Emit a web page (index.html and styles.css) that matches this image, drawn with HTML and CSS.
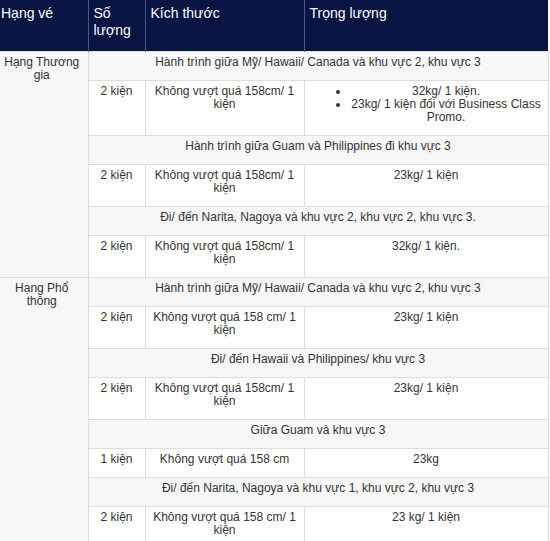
FILE: index.html
```html
<!DOCTYPE html>
<html lang="vi">
<head>
<meta charset="utf-8">
<title>Hành lý</title>
<link rel="stylesheet" href="styles.css">
</head>
<body>
<table class="bag-table">
  <colgroup>
    <col class="c-class">
    <col class="c-qty">
    <col class="c-size">
    <col class="c-weight">
  </colgroup>
  <thead>
    <tr>
      <th>Hạng vé</th>
      <th>Số lượng</th>
      <th>Kích thước</th>
      <th>Trọng lượng</th>
    </tr>
  </thead>
  <tbody>
    <tr>
      <td class="cls" rowspan="6">Hạng Thương gia</td>
      <td class="route" colspan="3">Hành trình giữa Mỹ/ Hawaii/ Canada và khu vực 2, khu vực 3</td>
    </tr>
    <tr>
      <td>2 kiện</td>
      <td>Không vượt quá 158cm/ 1 kiện</td>
      <td>
        <ul class="list">
          <li>32kg/ 1 kiện.</li>
          <li>23kg/ 1 kiện đối với Business Class Promo.</li>
        </ul>
      </td>
    </tr>
    <tr>
      <td class="route" colspan="3">Hành trình giữa Guam và Philippines đi khu vực 3</td>
    </tr>
    <tr>
      <td>2 kiện</td>
      <td>Không vượt quá 158cm/ 1 kiện</td>
      <td>23kg/ 1 kiện</td>
    </tr>
    <tr>
      <td class="route" colspan="3">Đi/ đến Narita, Nagoya và khu vực 2, khu vực 2, khu vực 3.</td>
    </tr>
    <tr>
      <td>2 kiện</td>
      <td>Không vượt quá 158cm/ 1 kiện</td>
      <td>32kg/ 1 kiện.</td>
    </tr>
    <tr>
      <td class="cls" rowspan="8">Hạng Phổ thông</td>
      <td class="route" colspan="3">Hành trình giữa Mỹ/ Hawaii/ Canada và khu vực 2, khu vực 3</td>
    </tr>
    <tr>
      <td>2 kiện</td>
      <td>Không vượt quá 158 cm/ 1 kiện</td>
      <td>23kg/ 1 kiện</td>
    </tr>
    <tr>
      <td class="route" colspan="3">Đi/ đến Hawaii và Philippines/ khu vực 3</td>
    </tr>
    <tr>
      <td>2 kiện</td>
      <td>Không vượt quá 158cm/ 1 kiện</td>
      <td>23kg/ 1 kiện</td>
    </tr>
    <tr>
      <td class="route" colspan="3">Giữa Guam và khu vực 3</td>
    </tr>
    <tr>
      <td>1 kiện</td>
      <td>Không vượt quá 158 cm</td>
      <td>23kg</td>
    </tr>
    <tr>
      <td class="route" colspan="3">Đi/ đến Narita, Nagoya và khu vực 1, khu vực 2, khu vực 3</td>
    </tr>
    <tr>
      <td>2 kiện</td>
      <td>Không vượt quá 158 cm/ 1 kiện</td>
      <td>23 kg/ 1 kiện</td>
    </tr>
  </tbody>
</table>
</body>
</html>
```
FILE: styles.css
```css
html, body {
  margin: 0;
  padding: 0;
  background: #ffffff;
}

.bag-table {
  margin-left: -4px;
  width: 552px;
  table-layout: fixed;
  border-collapse: collapse;
  font-family: "Liberation Sans", Arial, sans-serif;
  color: #333333;
}

.c-class { width: 92px; }
.c-qty { width: 57px; }
.c-size { width: 159px; }
.c-weight { width: 244px; }

.bag-table th {
  background: #071444;
  color: #ffffff;
  font-weight: normal;
  font-size: 14px;
  line-height: 17px;
  text-align: left;
  vertical-align: top;
  padding: 5px 5px 12px 5px;
  border-left: 1px solid #4e5578;
}

.bag-table th:first-child {
  border-left: none;
}

.bag-table td {
  font-size: 12px;
  line-height: 13px;
  text-align: center;
  vertical-align: top;
  padding: 4px 5px 11px 5px;
  border: 1px solid #dddddd;
  background: #ffffff;
}

.bag-table td.cls {
  background: #f7f7f7;
  border-left: none;
}

.bag-table td.route {
  background: #f7f7f7;
}

.list {
  margin: 0;
  padding-left: 40px;
  list-style: disc;
}
```
